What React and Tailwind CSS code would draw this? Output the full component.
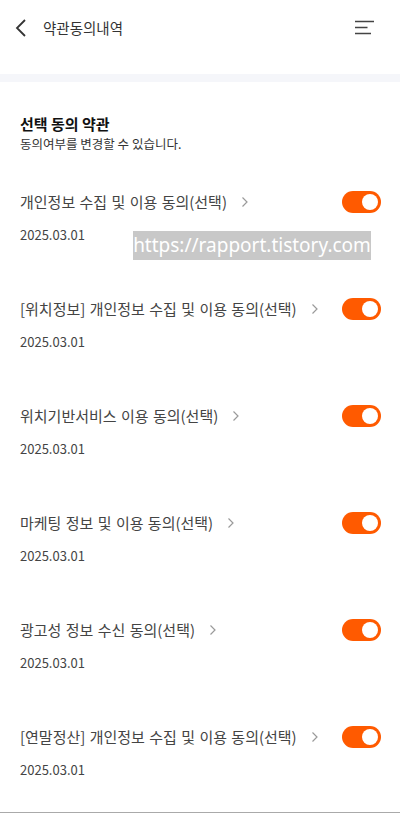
import React, { useState } from 'react';

const FONT = { fontFamily: '"Noto Sans CJK KR", "Noto Sans", sans-serif' };

const initialTerms = [
  { id: 1, title: '개인정보 수집 및 이용 동의(선택)', date: '2025.03.01' },
  { id: 2, title: '[위치정보] 개인정보 수집 및 이용 동의(선택)', date: '2025.03.01' },
  { id: 3, title: '위치기반서비스 이용 동의(선택)', date: '2025.03.01' },
  { id: 4, title: '마케팅 정보 및 이용 동의(선택)', date: '2025.03.01' },
  { id: 5, title: '광고성 정보 수신 동의(선택)', date: '2025.03.01' },
  { id: 6, title: '[연말정산] 개인정보 수집 및 이용 동의(선택)', date: '2025.03.01' },
];

const Toggle = ({ on, onChange }) => (
  <button
    onClick={onChange}
    className={`w-[39px] h-[22px] -mr-[1px] rounded-full flex items-center px-[3px] ${
      on ? 'bg-[#ff5a00] justify-end' : 'bg-[#d5d5d5] justify-start'
    }`}
  >
    <span className="w-[16px] h-[16px] rounded-full bg-white" />
  </button>
);

const TermItem = ({ term, onToggle }) => (
  <div className="flex flex-col">
    <div className="flex items-center justify-between h-[24px]">
      <div className="flex items-center">
        <span className="text-[15px] text-[#444] leading-[24px] [word-spacing:1px]">{term.title}</span>
        <svg className="ml-[14px]" width="8" height="12" viewBox="0 0 8 12" fill="none">
          <path d="M1.5 1.5L6 6l-4.5 4.5" stroke="#9a9a9a" strokeWidth="1.2" />
        </svg>
      </div>
      <Toggle on={term.agreed} onChange={onToggle} />
    </div>
    <div className="mt-[12px] text-[13px] text-[#444] leading-[18px]">{term.date}</div>
  </div>
);

export default function App() {
  const [terms, setTerms] = useState(initialTerms.map((t) => ({ ...t, agreed: true })));

  const toggle = (id) =>
    setTerms(terms.map((t) => (t.id === id ? { ...t, agreed: !t.agreed } : t)));

  return (
    <div className="w-[400px] min-h-[813px] bg-white relative" style={FONT}>
      {/* Header */}
      <div className="h-[56px] flex items-center justify-between pl-[14px] pr-[25px]">
        <div className="flex items-center">
          <svg width="14" height="20" viewBox="0 0 14 20" fill="none">
            <path d="M11 2L3 10l8 8" stroke="#333" strokeWidth="1.8" />
          </svg>
          <span className="ml-[15px] text-[14.5px] text-[#333]">약관동의내역</span>
        </div>
        <svg width="20" height="16" viewBox="0 0 20 16" fill="none">
          <path d="M0 1.5h19M0 7.5h12.5M0 13.5h16" stroke="#444" strokeWidth="1.6" />
        </svg>
      </div>

      <div className="mt-[18px] h-[8px] bg-[#f5f6fa]" />

      {/* Section */}
      <div className="px-[20px] pt-[32px]">
        <h2 className="text-[15px] font-bold text-[#111] leading-[20px]">선택 동의 약관</h2>
        <p className="mt-[2px] text-[12.5px] text-[#333] leading-[16px]">동의여부를 변경할 수 있습니다.</p>

        <div className="mt-[38px] flex flex-col gap-[53px]">
          {terms.map((t) => (
            <TermItem key={t.id} term={t} onToggle={() => toggle(t.id)} />
          ))}
        </div>
      </div>

      <div className="mt-[33px] border-b border-[#aaa]" />

      {/* Watermark */}
      <div
        className="absolute left-[133px] top-[231px] w-[238px] h-[29px] bg-[#c8c8c8] text-white text-[19px] leading-[29px] flex items-center justify-center"
        style={{ fontFamily: '"Noto Sans", sans-serif' }}
      >
        https://rapport.tistory.com
      </div>
    </div>
  );
}
